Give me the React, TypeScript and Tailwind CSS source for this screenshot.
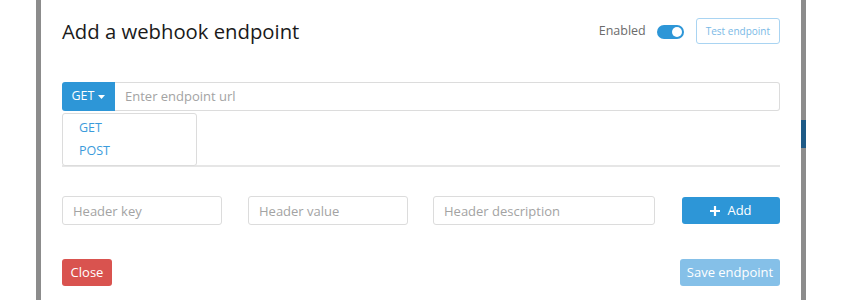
import { useState } from 'react';

const font = { fontFamily: '"Open Sans", "Noto Sans", sans-serif' };

function Toggle({ on }: { on: boolean }) {
  return (
    <span className={`inline-flex h-[14px] w-[27px] items-center rounded-full px-[2px] ${on ? 'justify-end bg-[#2d96d7]' : 'justify-start bg-[#cfcfcf]'}`}>
      <span className="h-[10px] w-[10px] rounded-full bg-white" />
    </span>
  );
}

function HeaderInput({ placeholder, width }: { placeholder: string; width: string }) {
  return (
    <input
      placeholder={placeholder}
      className={`h-[29px] ${width} rounded-[3px] border border-[#dcdcdc] bg-white px-[10px] text-[13px] text-[#333] outline-none placeholder:text-[#a3a3a3]`}
    />
  );
}

export default function App() {
  const [method] = useState('GET');

  return (
    <div className="flex h-[300px] w-[841px] overflow-hidden bg-white" style={font}>
      <div className="w-[36px] shrink-0 bg-white" />
      <div className="w-[5px] shrink-0 bg-[#8c8c8c]" />

      <section className="flex w-[760px] shrink-0 flex-col bg-white px-[21px]">
        <div className="mt-[16px] flex h-[30px] items-center justify-between">
          <h1 className="text-[20.3px] leading-[28px] text-[#1a1a1a]">Add a webhook endpoint</h1>
          <div className="flex items-center">
            <span className="text-[12.5px] text-[#6b6b6b]">Enabled</span>
            <span className="ml-[11px]">
              <Toggle on />
            </span>
            <button
              type="button"
              className="ml-[12px] h-[26px] rounded-[3px] border border-[#a9d4f2] px-[9px] text-[10px] text-[#7ab9e6]"
            >
              Test endpoint
            </button>
          </div>
        </div>

        <div className="relative mt-[36px] flex h-[29px]">
          <button
            type="button"
            className="flex w-[53px] items-center justify-center gap-[4px] rounded-l-[3px] bg-[#2d96d7] text-[12.5px] text-white"
          >
            {method}
            <svg width="7" height="4" viewBox="0 0 7 4">
              <path d="M0 0h7L3.5 4z" fill="white" />
            </svg>
          </button>
          <input
            placeholder="Enter endpoint url"
            className="flex-1 rounded-r-[3px] border border-l-0 border-[#dcdcdc] px-[10px] text-[13px] outline-none placeholder:text-[#a3a3a3]"
          />
          <ul className="absolute left-0 top-[31px] z-10 flex h-[53px] w-[135px] flex-col justify-center gap-[4px] rounded-[3px] border border-[#dcdcdc] bg-white pl-[16px] text-[12.5px] text-[#3b9bdb]">
            <li>GET</li>
            <li>POST</li>
          </ul>
        </div>

        <div className="mt-[54px] h-[2px] bg-[#e6e6e6]" />

        <div className="mt-[29px] flex items-center">
          <HeaderInput placeholder="Header key" width="w-[160px]" />
          <div className="ml-[26px]">
            <HeaderInput placeholder="Header value" width="w-[160px]" />
          </div>
          <div className="ml-[25px]">
            <HeaderInput placeholder="Header description" width="w-[222px]" />
          </div>
          <button
            type="button"
            className="ml-auto flex h-[27px] w-[98px] items-center justify-center gap-[7px] rounded-[3px] bg-[#2d96d7] text-[13px] text-white"
          >
            <svg width="10" height="10" viewBox="0 0 10 10">
              <path d="M5 0v10M0 5h10" stroke="white" strokeWidth="2.2" />
            </svg>
            Add
          </button>
        </div>

        <div className="mt-[34px] flex items-center justify-between">
          <button type="button" className="h-[27px] w-[50px] rounded-[3px] bg-[#d9534f] text-[13px] text-white">
            Close
          </button>
          <button type="button" className="h-[27px] w-[100px] rounded-[3px] bg-[#85c0e8] text-[13px] text-white">
            Save endpoint
          </button>
        </div>
      </section>

      <div className="flex w-[5px] shrink-0 flex-col">
        <div className="h-[120px] bg-[#8c8c8c]" />
        <div className="h-[28px] bg-[#1e5a86]" />
        <div className="flex-1 bg-[#8c8c8c]" />
      </div>
      <div className="flex-1 bg-white" />
    </div>
  );
}
